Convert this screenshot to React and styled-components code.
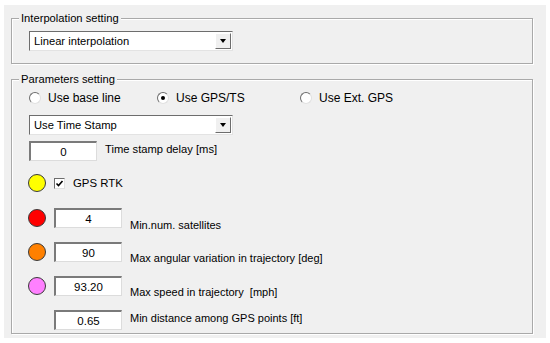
import React from 'react';
import styled, { createGlobalStyle } from 'styled-components';

const GlobalStyle = createGlobalStyle`
  body {
    margin: 0;
    background: #fff;
    font-family: "Liberation Sans", Arial, sans-serif;
    font-size: 11.2px;
    color: #000;
  }
`;

const Window = styled.div`
  margin: 5px 4px;
  width: 542px;
  height: 333px;
  box-sizing: border-box;
  background: #f0f0f0;
  padding: 13px 0 0 7px;
  display: flex;
  flex-direction: column;
`;

const Group = styled.div`
  position: relative;
  width: 522px;
  height: ${(p) => p.$height}px;
  margin-top: ${(p) => p.$top || 0}px;
  box-sizing: border-box;
  border: 1px solid #a9a9a9;
  box-shadow: inset 1px 1px 0 #fff, 1px 1px 0 #fff;
  padding: ${(p) => p.$pad}px 0 0 17px;
  display: flex;
  flex-direction: column;
`;

const Title = styled.span`
  position: absolute;
  top: -8px;
  left: 7px;
  padding: 0 2px;
  line-height: 14px;
  background: #f0f0f0;
`;

const Combo = styled.div`
  width: 204px;
  height: 20px;
  margin-top: ${(p) => p.$top || 0}px;
  box-sizing: border-box;
  background: #fff;
  border-top: 1px solid #6d6d6d;
  border-left: 1px solid #6d6d6d;
  border-right: 1px solid #e3e3e3;
  border-bottom: 1px solid #e3e3e3;
  display: flex;
  align-items: center;
  justify-content: space-between;
  padding-left: 4px;
`;

const DropButton = styled.div`
  width: 16px;
  height: 16px;
  margin-right: 1px;
  box-sizing: border-box;
  background: #f0f0f0;
  border-top: 1px solid #fff;
  border-left: 1px solid #fff;
  border-right: 1px solid #6d6d6d;
  border-bottom: 1px solid #6d6d6d;
  display: flex;
  align-items: center;
  justify-content: center;
`;

const Arrow = styled.span`
  width: 0;
  height: 0;
  border-left: 3.5px solid transparent;
  border-right: 3.5px solid transparent;
  border-top: 4px solid #000;
`;

const RadioRow = styled.div`
  display: flex;
  align-items: center;
  height: 16px;
  font-size: 12px;
`;

const RadioItem = styled.label`
  display: flex;
  align-items: center;
  gap: 7px;
  width: ${(p) => p.$width}px;
`;

const RadioDot = styled.span`
  width: 12px;
  height: 12px;
  box-sizing: border-box;
  border-radius: 50%;
  background: #fff;
  border: 1px solid #6d6d6d;
  border-right-color: #e0e0e0;
  border-bottom-color: #e0e0e0;
  display: flex;
  align-items: center;
  justify-content: center;
  &::after {
    content: '';
    width: 4px;
    height: 4px;
    border-radius: 50%;
    background: ${(p) => (p.$on ? '#000' : 'transparent')};
  }
`;

const Row = styled.div`
  display: flex;
  align-items: center;
  gap: 8px;
  margin-top: ${(p) => p.$top}px;
  height: 20px;
`;

const Field = styled.div`
  width: 68px;
  height: 20px;
  box-sizing: border-box;
  background: #fff;
  border-top: 2px solid #7a7a7a;
  border-left: 2px solid #7a7a7a;
  border-right: 1px solid #dcdcdc;
  border-bottom: 1px solid #dcdcdc;
  display: flex;
  align-items: center;
  justify-content: center;
  font-size: 11.5px;
`;

const Slot = styled.div`
  width: 18px;
  height: 18px;
  margin-left: -1px;
  display: flex;
  align-items: center;
  justify-content: center;
`;

const Lamp = styled.span`
  width: 18px;
  height: 18px;
  box-sizing: border-box;
  border-radius: 50%;
  border: 1px solid #3a3a3a;
  background: ${(p) => p.$color};
`;

const Label = styled.span`
  font-size: ${(p) => p.$size || 11}px;
  white-space: pre;
  position: relative;
  top: ${(p) => p.$drop || 0}px;
`;

const Check = styled.span`
  width: 11px;
  height: 11px;
  box-sizing: border-box;
  background: #fff;
  border: 1px solid #6d6d6d;
  border-right-color: #e0e0e0;
  border-bottom-color: #e0e0e0;
  display: flex;
  align-items: center;
  justify-content: center;
`;

const params = [
  { color: '#ff0000', value: '4', label: 'Min.num. satellites', top: 15, drop: 6.5 },
  { color: '#ff8000', value: '90', label: 'Max angular variation in trajectory [deg]', top: 14, drop: 5.5 },
  { color: '#ff80ff', value: '93.20', label: 'Max speed in trajectory  [mph]', top: 14, drop: 6 },
  { color: null, value: '0.65', label: 'Min distance among GPS points [ft]', top: 14, drop: -2.5 },
];

export default function App() {
  return (
    <>
      <GlobalStyle />
      <Window>
        <Group $height={46} $pad={12}>
          <Title>Interpolation setting</Title>
          <Combo>
            Linear interpolation
            <DropButton><Arrow /></DropButton>
          </Combo>
        </Group>
        <Group $height={255} $top={15} $pad={10}>
          <Title>Parameters setting</Title>
          <RadioRow>
            <RadioItem $width={128}><RadioDot />Use base line</RadioItem>
            <RadioItem $width={143}><RadioDot $on />Use GPS/TS</RadioItem>
            <RadioItem><RadioDot />Use Ext. GPS</RadioItem>
          </RadioRow>
          <Combo $top={9}>
            Use Time Stamp
            <DropButton><Arrow /></DropButton>
          </Combo>
          <Row $top={6}>
            <Field>0</Field>
            <Label $size={11.2} $drop={-2}>Time stamp delay [ms]</Label>
          </Row>
          <Row $top={12}>
            <Slot><Lamp $color="#ffff00" /></Slot>
            <Check>
              <svg width="9" height="9" viewBox="0 0 9 9">
                <path d="M1.5 4.5 L3.5 6.5 L7.5 2" fill="none" stroke="#000" strokeWidth="1.6" />
              </svg>
            </Check>
            <Label $size={11.4}>GPS RTK</Label>
          </Row>
          {params.map((p) => (
            <Row key={p.label} $top={p.top}>
              <Slot>{p.color && <Lamp $color={p.color} />}</Slot>
              <Field>{p.value}</Field>
              <Label $drop={p.drop}>{p.label}</Label>
            </Row>
          ))}
        </Group>
      </Window>
    </>
  );
}
